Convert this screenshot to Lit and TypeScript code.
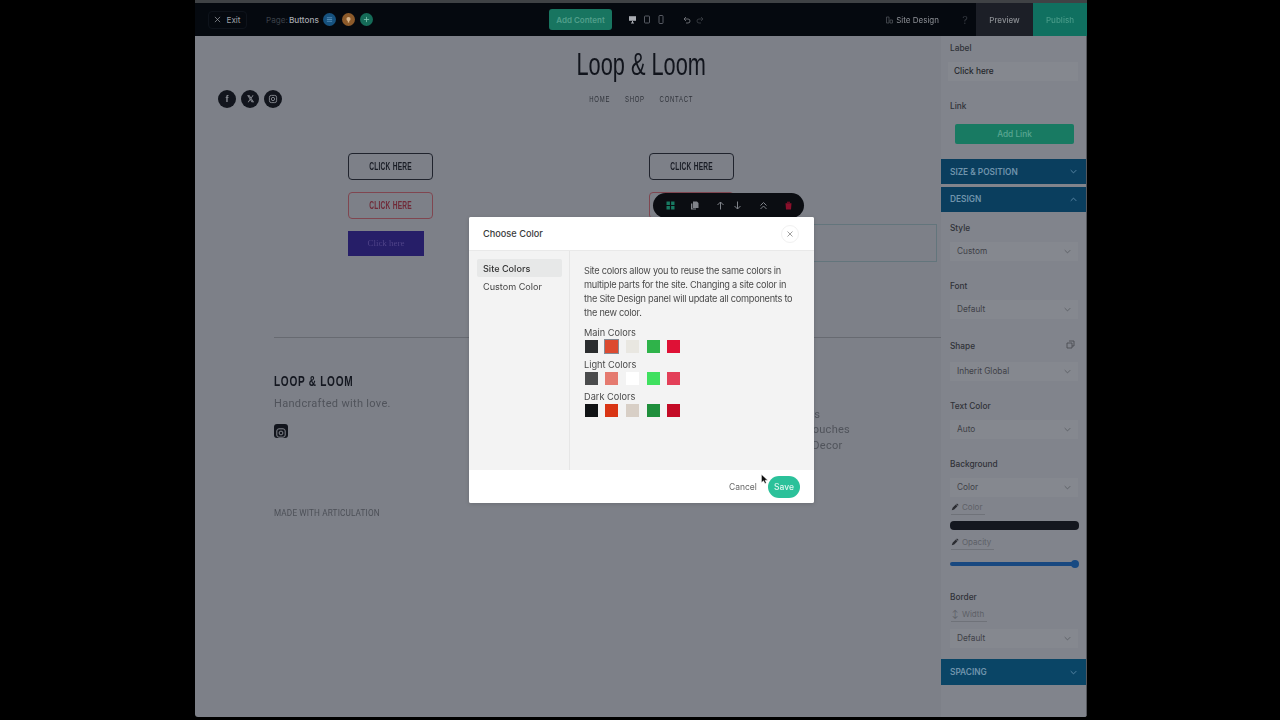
import { LitElement, html, css } from "lit";
import { customElement } from "lit/decorators.js";

const chev = (up = false) => html`<svg class="chev" viewBox="0 0 10 6"><path d="${up ? "M1 5l4-4 4 4" : "M1 1l4 4 4-4"}" fill="none" stroke="currentColor" stroke-width="1.1"/></svg>`;
const pen = html`<svg class="pen" viewBox="0 0 10 10"><path d="M1 9l1-3 4-4 2 2-4 4z" fill="#2a2c31"/><path d="M6.5 1.5l1-1 2 2-1 1z" fill="#2a2c31"/></svg>`;
const insta = html`<svg viewBox="0 0 14 14"><rect x="2.8" y="2.8" width="8.4" height="8.4" rx="2.2" fill="none" stroke="currentColor" stroke-width="1"/><circle cx="7" cy="7" r="1.9" fill="none" stroke="currentColor" stroke-width="1"/></svg>`;

const palette = [
  { name: "Main Colors", colors: ["#2b2d2f", "#dc4a30", "#e9e7e1", "#2fb34a", "#df1136"] },
  { name: "Light Colors", colors: ["#4a4b4c", "#e57a6f", "#ffffff", "#3fe05f", "#e33f58"] },
  { name: "Dark Colors", colors: ["#101214", "#d93514", "#d8cfc6", "#1f8f3c", "#c40b26"] },
];

@customElement("app-root")
export class AppRoot extends LitElement {
  static styles = css`
    :host { display: block; width: 1280px; height: 720px; background: #000; overflow: hidden; font-family: "Inter", "Liberation Sans", sans-serif; position: relative; }
    .app { position: absolute; left: 195px; top: 0; width: 892px; height: 717px; background: #7d8088; overflow: hidden; border-radius: 0 0 3px 3px; display: flex; flex-direction: column; filter: blur(0.45px); }
    .strip { height: 3px; background: #3f4245; flex: none; }
    .top { height: 33px; flex: none; background: #05090f; display: flex; align-items: center; font-size: 8.2px; color: #a9acb2; }
    .exit { margin-left: 13px; width: 39px; height: 18px; border: 1px solid #0e131b; border-radius: 4px; box-sizing: border-box; display: flex; align-items: center; justify-content: center; gap: 5px; color: #9da0a6; }
    .exit svg { width: 7px; height: 7px; }
    .page { margin-left: 19px; width: 119px; display: flex; align-items: center; }
    .dim { color: #3b4048; margin-right: 1px; }
    .page b { font-weight: 500; color: #a4a7ad; }
    .dot { width: 13px; height: 13px; border-radius: 50%; display: flex; align-items: center; justify-content: center; margin-left: 5.5px; }
    .dot svg { width: 7px; height: 7px; }
    .dot.a { background: #16527f; margin-left: 4.5px; color: #5f9ac4; }
    .dot.b { background: #8c5a2a; color: #d8b58c; }
    .dot.c { background: #156b58; color: #7fc6b3; }
    .add { margin-left: 164px; width: 63px; height: 21px; border-radius: 3px; background: #187560; color: #519f8b; display: flex; align-items: center; justify-content: center; font-weight: 600; font-size: 8px; }
    .devices { margin-left: 16px; display: flex; align-items: center; gap: 6px; color: #6d7178; }
    .devices svg { width: 8px; height: 9px; }
    .devices svg:first-child { width: 9px; color: #a9acb2; }
    .hist { margin-left: 18px; display: flex; gap: 5px; color: #7d8187; }
    .hist svg { width: 8px; height: 8px; }
    .hist svg + svg { color: #3e4248; }
    .site { margin-left: auto; display: flex; gap: 3px; align-items: center; color: #8d9096; font-size: 8px; }
    .site svg { width: 7px; height: 8px; color: #4d5157; }
    .q { margin-left: 20px; width: 12px; text-align: center; color: #33373e; font-size: 11px; }
    .pv { margin-left: 5px; width: 57px; height: 100%; background: #1c1f27; color: #8b8e93; display: flex; align-items: center; justify-content: center; font-weight: 500; font-size: 8px; }
    .pb { width: 54px; height: 100%; background: #107060; color: #489a88; display: flex; align-items: center; justify-content: center; font-weight: 500; font-size: 8px; }

    .canvas { flex: 1; }
    .sq { display: inline-block; white-space: nowrap; }
    .title { margin: 9px 0 0; text-align: center; font: 400 32px/38px "Liberation Sans", sans-serif; color: #11141c; }
    .title .sq { transform: scaleX(0.68); }
    .hrow { display: grid; grid-template-columns: 1fr auto 1fr; height: 24px; margin-top: 4px; align-items: center; }
    .soc { display: flex; gap: 5px; padding-left: 23px; }
    .soc span { width: 18px; height: 18px; border-radius: 50%; background: #12151d; color: #8e9198; display: flex; align-items: center; justify-content: center; font: 700 9px "Liberation Sans", sans-serif; }
    .soc svg { width: 12px; height: 12px; }
    .nav { display: flex; gap: 21px; font: 400 8.5px "Liberation Sans", sans-serif; letter-spacing: 1.1px; color: #2f323a; transform: scaleX(0.7); }
    .btns { display: grid; grid-template-columns: 301px 288px; margin: 42px 0 0 153px; }
    .col { display: flex; flex-direction: column; gap: 12px; align-items: flex-start; }
    .btn { width: 85px; height: 27px; box-sizing: border-box; border: 1px solid #20232d; border-radius: 4px; display: flex; align-items: center; justify-content: center; padding-bottom: 1px; font: 700 11px "Liberation Sans", sans-serif; letter-spacing: 0.4px; color: #191c25; }
    .btn .sq { transform: scaleX(0.6); }
    .btn.red { border-color: #804650; color: #702a38; }
    .btn.pur { width: 76px; height: 25px; border: 0; border-radius: 0; background: #261e68; color: #4f4388; font: 400 9px "Liberation Serif", serif; letter-spacing: 0; }
    .sel { width: 288px; height: 38px; box-sizing: border-box; border: 1px solid #63757c; margin-top: -7px; }
    .rule { height: 1px; background: #676a71; margin: 75px 0 0 79px; }
    .foot { display: grid; grid-template-columns: 504.5px 1fr; margin: 34px 0 0 79px; }
    .brand { font: 700 15.5px/17px "Liberation Sans", sans-serif; letter-spacing: 1.1px; color: #141720; }
    .brand .sq { transform: scaleX(0.65); transform-origin: left center; }
    .tag { font: 400 11px/16px Roboto, sans-serif; letter-spacing: 0.32px; color: #50535b; margin-top: 7px; }
    .ig { width: 14px; height: 14px; background: #12151d; border-radius: 3px; color: #82858c; margin-top: 12px; display: block; }
    .links { padding-top: 34.5px; font: 400 11px/15.5px Roboto, sans-serif; letter-spacing: 0.3px; color: #50535b; }
    .made { margin: 54px 0 0 79px; font: 400 8.2px/12px Roboto, sans-serif; letter-spacing: 0.15px; color: #4c4f57; }

    .panel { position: absolute; left: 746px; top: 36px; width: 146px; bottom: 0; background: #81848c; font-size: 8.3px; color: #33353b; border-right: 1px solid #55575c; box-sizing: border-box; }
    .lb { margin-left: 9px; height: 12px; line-height: 12px; font-weight: 500; display: flex; justify-content: space-between; padding-right: 11px; color: #303238; }
    .lb svg { width: 9px; height: 9px; color: #44464c; }
    .lb.first { margin-top: 6px; }
    .lb.link { margin-top: 19.5px; }
    .lb.style { margin-top: 10.5px; }
    .lb.next { margin-top: 19.5px; }
    .lb.shape { margin-top: 21.5px; }
    .lb.border { margin-top: 25px; }
    .inp { margin: 7.5px 0 0 7px; width: 130px; height: 19px; background: #85888f; padding-left: 6px; box-sizing: border-box; display: flex; align-items: center; color: #24262b; font-weight: 500; }
    .addl { margin: 11.5px 0 0 14px; width: 119px; height: 20px; border-radius: 2px; background: #187a62; color: #5aa692; display: flex; align-items: center; justify-content: center; font-weight: 500; }
    .hd { height: 25px; background: #0a3e5e; color: #7094ac; display: flex; align-items: center; justify-content: space-between; padding: 0 9px; font-weight: 600; font-size: 8.3px; }
    .hd.size { margin-top: 15.5px; }
    .hd.design { margin-top: 2.5px; }
    .hd.spacing { margin-top: 11.5px; height: 26px; background: #0a4566; }
    .chev { width: 7px; height: 5px; color: #6c96b3; }
    .sl { margin: 7.5px 0 0 9px; width: 128px; height: 19px; background: #85888f; display: flex; align-items: center; justify-content: space-between; padding: 0 7px; box-sizing: border-box; color: #3f4147; }
    .sl.tall { margin-top: 9.5px; }
    .sl.tight { margin-top: 6.5px; }
    .sl .chev { color: #55585e; }
    .sub { display: flex; width: fit-content; align-items: center; gap: 3px; margin-left: 10px; color: #5d6067; font-size: 8px; line-height: 10px; border-bottom: 1px solid #6f7279; padding: 1px 3px 2px 0; }
    .sub.a { margin-top: 4.5px; }
    .sub.b { margin-top: 6px; }
    .sub.c { margin-top: 5px; }
    .pen { width: 8px; height: 8px; }
    .bar { margin: 6px 0 0 9px; width: 129px; height: 9px; border-radius: 4px; background: #14171f; }
    .slider { margin: 12px 0 0 9px; width: 128px; height: 4px; border-radius: 2px; background: #184880; position: relative; }
    .knob { position: absolute; right: -1px; top: -2px; width: 8px; height: 8px; border-radius: 50%; background: #184a82; }
    .w-icon { width: 8px; text-align: center; color: #5d6067; }

    .tb { position: absolute; left: 458px; top: 193px; width: 151px; height: 25px; border-radius: 13px; background: #0b0d12; }
    .tbin { height: 100%; display: grid; grid-template-columns: 24px 26px 17px 26px 25px 9px; padding-left: 12.5px; align-items: center; justify-items: start; }
    .tbin svg { width: 9px; height: 9px; color: #80838a; display: block; }
    .tbin svg.grid { color: #187a62; }
    .tbin svg.del { color: #8a0f2b; }
    .cursor { position: absolute; left: 761px; top: 474px; width: 7px; height: 10px; z-index: 5; }

    .modal { position: absolute; left: 469px; top: 217px; width: 345px; height: 286px; background: #f3f3f3; border-radius: 2px; display: flex; flex-direction: column; overflow: hidden; box-shadow: 0 1px 4px rgba(0,0,0,.15); filter: blur(0.3px); }
    .mh { height: 33px; flex: none; background: #fff; border-bottom: 1px solid #e9e9e9; display: flex; align-items: center; justify-content: space-between; padding: 0 15px 0 14px; font-size: 9.2px; font-weight: 500; color: #3a3a3a; }
    .close { width: 18px; height: 18px; border-radius: 50%; border: 1px solid #f1f1f1; box-sizing: border-box; display: flex; align-items: center; justify-content: center; color: #777; }
    .close svg { width: 6px; height: 6px; }
    .mb { flex: 1; display: flex; min-height: 0; }
    .side { width: 101px; flex: none; border-right: 1px solid #e6e6e6; padding: 8px 7px 0 8px; box-sizing: border-box; font-size: 9.1px; color: #444; }
    .side div { height: 18px; display: flex; align-items: center; padding-left: 6px; border-radius: 2px; }
    .side .on { background: #e7e8e8; color: #333; font-weight: 500; }
    .side div + div { margin-top: 0.5px; }
    .ct { padding: 13px 0 0 14px; flex: 1; }
    .ct p { margin: 0; white-space: nowrap; font-size: 9.2px; letter-spacing: -0.25px; line-height: 13.85px; color: #4a4a4a; }
    .pl { font-size: 9.2px; line-height: 11px; color: #4a4a4a; margin-top: 6px; }
    .pl.first { margin-top: 8px; }
    .sw { display: flex; gap: 7.7px; margin: 2px 0 0 0.5px; height: 13px; }
    .sw i { display: block; width: 13px; height: 13px; box-sizing: border-box; }
    .sw i.picked { outline: 1.5px solid #858c96; outline-offset: 0.3px; }
    .mf { height: 33px; flex: none; background: #fff; display: flex; align-items: center; justify-content: flex-end; padding-right: 14px; gap: 12px; font-size: 8.5px; }
    .cancel { width: 27px; color: #666; text-align: center; }
    .save { width: 32px; height: 22px; border-radius: 11px; background: #2bc19a; color: #dff6ef; display: flex; align-items: center; justify-content: center; font-weight: 500; }
  `;

  render() {
    return html`
      <div class="app">
        <div class="strip"></div>
        <div class="top">
          <div class="exit"><svg viewBox="0 0 8 8"><path d="M1 1l6 6M7 1L1 7" stroke="currentColor" stroke-width=".8"/></svg>Exit</div>
          <div class="page"><span class="dim">Page:</span><b>Buttons</b>
            <span class="dot a"><svg viewBox="0 0 8 8"><path d="M1 2h6M1 4h6M1 6h6" stroke="currentColor" stroke-width=".9"/></svg></span>
            <span class="dot b"><svg viewBox="0 0 8 8"><circle cx="4" cy="3.5" r="2.4" fill="currentColor"/><rect x="3.2" y="5.5" width="1.6" height="2" fill="currentColor"/></svg></span>
            <span class="dot c"><svg viewBox="0 0 8 8"><path d="M4 1v6M1 4h6" stroke="currentColor" stroke-width=".9"/></svg></span>
          </div>
          <div class="add">Add Content</div>
          <div class="devices">
            <svg viewBox="0 0 9 9"><path d="M1 1.2h7v4.6H1z" fill="currentColor"/><path d="M3 8h3M4.5 6v2" stroke="currentColor"/></svg>
            <svg viewBox="0 0 8 9"><rect x="1.5" y="1" width="5" height="7" rx=".8" fill="none" stroke="currentColor" stroke-width=".8"/></svg>
            <svg viewBox="0 0 8 9"><rect x="2" y="0.5" width="4" height="8" rx=".8" fill="none" stroke="currentColor" stroke-width=".8"/></svg>
          </div>
          <div class="hist">
            <svg viewBox="0 0 8 8"><path d="M3 1L1 3l2 2M1 3h4a2 2 0 010 4H3" fill="none" stroke="currentColor" stroke-width=".8"/></svg>
            <svg viewBox="0 0 8 8"><path d="M5 1l2 2-2 2M7 3H3a2 2 0 000 4h2" fill="none" stroke="currentColor" stroke-width=".8"/></svg>
          </div>
          <div class="site"><svg viewBox="0 0 7 8"><path d="M.5 1h2.5v6H.5zM4 4h2.5v3H4z" fill="none" stroke="currentColor" stroke-width=".8"/></svg>Site Design</div>
          <div class="q">?</div>
          <div class="pv">Preview</div>
          <div class="pb">Publish</div>
        </div>

        <div class="canvas">
          <h1 class="title"><span class="sq">Loop &amp; Loom</span></h1>
          <div class="hrow">
            <div class="soc">
              <span>f</span>
              <span>𝕏</span>
              <span>${insta}</span>
            </div>
            <div class="nav"><span>HOME</span><span>SHOP</span><span>CONTACT</span></div>
            <div></div>
          </div>
          <div class="btns">
            <div class="col">
              <div class="btn"><span class="sq">CLICK HERE</span></div>
              <div class="btn red"><span class="sq">CLICK HERE</span></div>
              <div class="btn pur">Click here</div>
            </div>
            <div class="col">
              <div class="btn"><span class="sq">CLICK HERE</span></div>
              <div class="btn red"><span class="sq">CLICK HERE</span></div>
              <div class="sel"></div>
            </div>
          </div>
          <div class="rule"></div>
          <div class="foot">
            <div>
              <div class="brand"><span class="sq">LOOP &amp; LOOM</span></div>
              <div class="tag">Handcrafted with love.</div>
              <span class="ig">${insta}</span>
            </div>
            <div class="links">Candles<br />Final Touches<br />Home Decor</div>
          </div>
          <div class="made">MADE WITH ARTICULATION</div>
        </div>

        <aside class="panel">
          <div class="lb first">Label</div>
          <div class="inp">Click here</div>
          <div class="lb link">Link</div>
          <div class="addl">Add Link</div>
          <div class="hd size">SIZE &amp; POSITION ${chev()}</div>
          <div class="hd design">DESIGN ${chev(true)}</div>
          <div class="lb style">Style</div>
          <div class="sl"><span>Custom</span>${chev()}</div>
          <div class="lb next">Font</div>
          <div class="sl"><span>Default</span>${chev()}</div>
          <div class="lb shape">Shape<svg viewBox="0 0 9 9"><path d="M3 1h5v5H6M1 3h5v5H1z" fill="none" stroke="currentColor" stroke-width=".8"/></svg></div>
          <div class="sl tall"><span>Inherit Global</span>${chev()}</div>
          <div class="lb next">Text Color</div>
          <div class="sl"><span>Auto</span>${chev()}</div>
          <div class="lb next">Background</div>
          <div class="sl"><span>Color</span>${chev()}</div>
          <div class="sub a">${pen}Color</div>
          <div class="bar"></div>
          <div class="sub b">${pen}Opacity</div>
          <div class="slider"><span class="knob"></span></div>
          <div class="lb border">Border</div>
          <div class="sub c"><span class="w-icon">↕</span>Width</div>
          <div class="sl tight"><span>Default</span>${chev()}</div>
          <div class="hd spacing">SPACING ${chev()}</div>
        </aside>

        <div class="tb"><div class="tbin">
          <svg class="grid" viewBox="0 0 9 9"><path d="M.5.5h3.4v3.4H.5zM5.1.5h3.4v3.4H5.1zM.5 5.1h3.4v3.4H.5zM5.1 5.1h3.4v3.4H5.1z" fill="currentColor"/></svg>
          <svg viewBox="0 0 9 9"><path d="M3 .5h4l1.5 1.5v5H3zM1 2.5h1.4v5.1H6V8.5H1z" fill="currentColor"/></svg>
          <svg viewBox="0 0 9 9"><path d="M4.5 8.5V1M1.5 4l3-3 3 3" fill="none" stroke="currentColor"/></svg>
          <svg viewBox="0 0 9 9"><path d="M4.5.5V8M1.5 5l3 3 3-3" fill="none" stroke="currentColor"/></svg>
          <svg viewBox="0 0 9 9"><path d="M1.5 4.5l3-3 3 3M1.5 8l3-3 3 3" fill="none" stroke="currentColor"/></svg>
          <svg class="del" viewBox="0 0 9 9"><path d="M1.5 2.2h6L7 8.5H2zM3 .8h3v1H3z" fill="currentColor"/></svg>
        </div></div>
      </div>

      <div class="modal">
        <div class="mh"><span>Choose Color</span>
          <span class="close"><svg viewBox="0 0 6 6"><path d="M.5.5l5 5M5.5.5l-5 5" stroke="currentColor" stroke-width=".7"/></svg></span>
        </div>
        <div class="mb">
          <div class="side"><div class="on">Site Colors</div><div>Custom Color</div></div>
          <div class="ct">
            <p>Site colors allow you to reuse the same colors in<br />multiple parts for the site. Changing a site color in<br />the Site Design panel will update all components to<br />the new color.</p>
            ${palette.map((g, i) => html`
              <div class="pl ${i === 0 ? "first" : ""}">${g.name}</div>
              <div class="sw">${g.colors.map((c, j) => html`<i class="${i === 0 && j === 1 ? "picked" : ""}" style="background:${c}"></i>`)}</div>
            `)}
          </div>
        </div>
        <div class="mf"><span class="cancel">Cancel</span><span class="save">Save</span></div>
      </div>
      <svg class="cursor" viewBox="0 0 7 10"><path d="M.5.5v8l2-1.8L4 9.5l1.3-.6L4 6.2h2.7z" fill="#111" stroke="#fff" stroke-width=".4"/></svg>
    `;
  }
}
